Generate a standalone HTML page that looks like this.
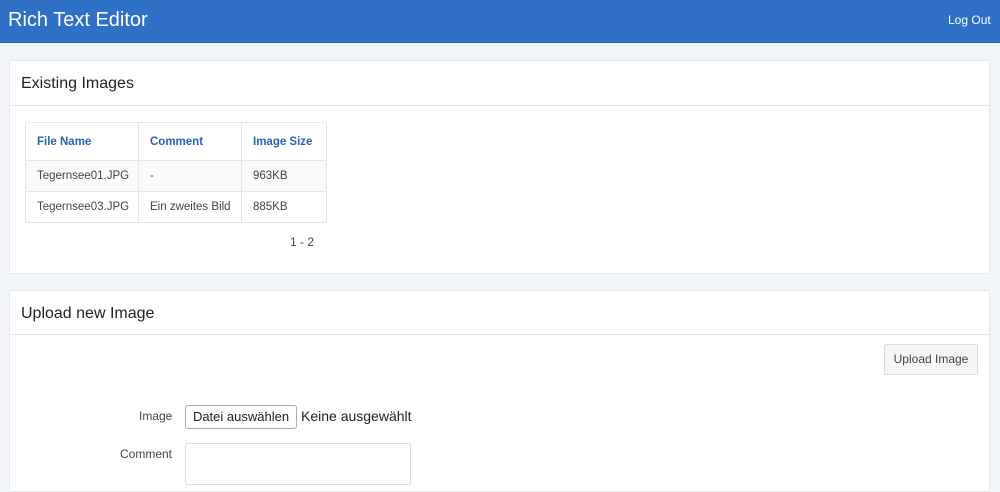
<!DOCTYPE html><html><head><style>
body{margin:0;width:1000px;height:458px;overflow:hidden;background:#f1f4f8;font-family:"Liberation Sans",sans-serif;position:relative}
.a{position:absolute}
.nav{left:0;top:0;width:1000px;height:42px;background:#3071c8;border-bottom:1px solid #2a62b0}
.card{background:#fff;border:1px solid #e3e6ea;border-radius:3px;left:9px;width:979px}
.hd{position:absolute;left:0;right:0;top:0;border-bottom:1px solid #e3e6ea;font-size:16px;color:#222;padding-left:11px}
table{border-collapse:collapse;font-size:11.5px;color:#444;table-layout:fixed;width:301px}
td,th{border:1px solid #e6e6e6;padding:0 0 0 11px;text-align:left;white-space:nowrap;overflow:hidden}
th{color:#2a62b8;height:37px;font-weight:bold}
td{height:30px}
tr.s td{background:#fafafa}
</style></head><body>
<div class="a nav"><span class="a" style="left:8px;top:9px;color:#fff;font-size:20px">Rich Text Editor</span><span class="a" style="left:948px;top:13px;color:#fff;font-size:12px">Log Out</span></div>
<div class="a card" style="top:60px;height:212px"><div class="hd" style="height:44px;line-height:46px">Existing Images</div>
<table class="a" style="left:15px;top:61px"><colgroup><col style="width:113px"><col style="width:103px"><col style="width:85px"></colgroup><tr><th>File Name</th><th>Comment</th><th>Image Size</th></tr>
<tr class="s"><td>Tegernsee01.JPG</td><td>-</td><td>963KB</td></tr>
<tr><td>Tegernsee03.JPG</td><td>Ein zweites Bild</td><td>885KB</td></tr></table>
<span class="a" style="left:280px;top:174px;font-size:12px;color:#444">1 - 2</span></div>
<div class="a card" style="top:290px;height:200px"><div class="hd" style="height:43px;line-height:45px">Upload new Image</div>
<div class="a" style="left:874px;top:53px;width:92px;height:29px;border:1px solid #ddd;background:#f5f5f5;border-radius:2px;font-size:12px;color:#444;text-align:center;line-height:29px">Upload Image</div>
<span class="a" style="left:129px;top:118px;font-size:12px;color:#444">Image</span>
<div class="a" style="left:175px;top:114px;width:110px;height:22px;border:1px solid #aaa;border-radius:3px;background:#fff;font-size:13px;line-height:22px;text-align:center;color:#222">Datei auswählen</div>
<span class="a" style="left:291px;top:117px;font-size:14px;color:#222">Keine ausgewählt</span>
<span class="a" style="left:110px;top:156px;font-size:12px;color:#444">Comment</span>
<div class="a" style="left:175px;top:152px;width:224px;height:40px;border:1px solid #ddd;border-radius:2px"></div>
</div>
</body></html>
